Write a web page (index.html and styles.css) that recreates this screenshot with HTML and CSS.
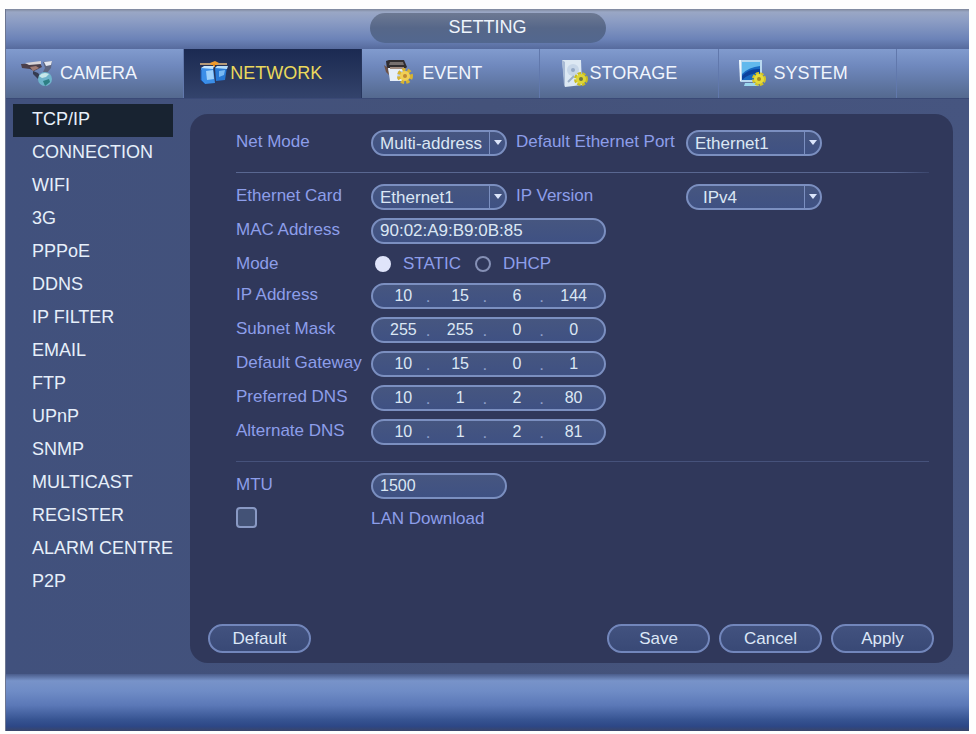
FILE: index.html
```html
<!DOCTYPE html>
<html lang="en">
<head>
    <meta charset="UTF-8">
    <meta name="viewport" content="width=device-width, initial-scale=1.0">
    <title>Setting - Network</title>
    <link rel="stylesheet" href="styles.css">
</head>
<body>
    <div class="window">
        <header class="title-bar">
            <h1 class="title">SETTING</h1>
        </header>

        <nav class="tabs">
            <a class="tab" href="#camera">
                <svg class="tab-icon" width="34" height="30" viewBox="0 0 34 30">
                    <path d="M0 5L19 4L21 8L13 12L9 10L1 9Z" fill="#4b3f4a"/>
                    <path d="M4 4L20 2L20 5L8 6Z" fill="#d8d4d8"/>
                    <path d="M9 8L15 7L18 9L12 12Z" fill="#a07c74"/>
                    <path d="M22 3L31 2L30 9L26 14L22 13L24 9Z" fill="#5d657f"/>
                    <path d="M23 3L31 2L30 6L25 7Z" fill="#e4e8f0"/>
                    <path d="M12 12L17 14L20 18L17 20L12 15Z" fill="#353b50"/>
                    <circle cx="24" cy="20" r="7" fill="#6fb4cb"/>
                    <path d="M18 17Q22 12 28 15L25 18L21 19Z" fill="#c7e7ea"/>
                    <path d="M22 22L28 20L29 23L24 27Z" fill="#2d7f84"/>
                </svg>
                <span class="tab-label">CAMERA</span>
            </a>
            <a class="tab tab-active" href="#network">
                <svg class="tab-icon" width="30" height="30" viewBox="0 0 30 30">
                    <path d="M1 5H28" stroke="#b59a78" stroke-width="2"/>
                    <path d="M11 4L16 2L20 4L18 6H12Z" fill="#ee9b2e"/>
                    <path d="M15 5V8" stroke="#e28a20" stroke-width="2"/>
                    <path d="M2 9L14 8L16 24L6 25L2 21Z" fill="#3b8ee8"/>
                    <path d="M2 9L5 7H15L14 10Z" fill="#c4e6ff"/>
                    <path d="M7 12L14 11L15 20L8 21Z" fill="#9dd0fb"/>
                    <path d="M16 9L28 8L26 21L17 22Z" fill="#2878d4"/>
                    <path d="M16 9L18 7H29L28 10Z" fill="#b3dcfb"/>
                    <path d="M20 12L26 11L25 16L20 18Z" fill="#78b9f4"/>
                    <path d="M2 11V21L6 25" stroke="#1a56ad" fill="none"/>
                </svg>
                <span class="tab-label">NETWORK</span>
            </a>
            <a class="tab" href="#event">
                <svg class="tab-icon" width="32" height="30" viewBox="0 0 32 30">
                    <path d="M3 2L6 1H21L24 8L22 10H4Z" fill="#302d30"/>
                    <path d="M7 3H20L21 6H6Z" fill="#77706f"/>
                    <path d="M1 6L5 9L7 17L3 13Z" fill="#6c5147"/>
                    <path d="M5 9H21V22H7Z" fill="#e6eef8"/>
                    <path d="M7 9H21" stroke="#a08b80" stroke-width="2"/>
                    <path d="M15 12H20V20H14Z" fill="#b9cdec"/>
                    <circle cx="22" cy="17" r="6" fill="none" stroke="#d8b430" stroke-width="4" stroke-dasharray="3 2"/>
                    <circle cx="22" cy="17" r="5" fill="#f1cf55"/>
                    <circle cx="22" cy="17" r="2" fill="#c08a35"/>
                </svg>
                <span class="tab-label">EVENT</span>
            </a>
            <a class="tab" href="#storage">
                <svg class="tab-icon" width="28" height="30" viewBox="0 0 28 30">
                    <path d="M1 1H20L21 26L4 28Z" fill="#dce8f3"/>
                    <path d="M1 1L4 3V28L3 26Z" fill="#a9bbd5"/>
                    <circle cx="12" cy="11" r="6" fill="#c6d6e8"/>
                    <circle cx="12" cy="11" r="2" fill="#93a7c4"/>
                    <path d="M7 23L13 17" stroke="#9aaec8" stroke-width="2"/>
                    <circle cx="20" cy="20" r="5" fill="none" stroke="#c9bd21" stroke-width="4" stroke-dasharray="3 1"/>
                    <circle cx="20" cy="20" r="5" fill="#ded637"/>
                    <circle cx="20" cy="20" r="2" fill="#6d7740"/>
                </svg>
                <span class="tab-label">STORAGE</span>
            </a>
            <a class="tab" href="#system">
                <svg class="tab-icon" width="30" height="30" viewBox="0 0 30 30">
                    <path d="M2 1H25V23H4Z" fill="#b9d8f0"/>
                    <path d="M2 1H4V23L3 22Z" fill="#eef7fd"/>
                    <path d="M5 3H23V21H5Z" fill="#1769c2"/>
                    <path d="M5 3H23V7Q12 8 5 15Z" fill="#61b9ed"/>
                    <path d="M5 17Q12 9 23 10V14Q12 14 5 21Z" fill="#0b429e"/>
                    <path d="M8 24H20L22 27H7Z" fill="#9bd7ee"/>
                    <circle cx="22" cy="20" r="5" fill="none" stroke="#d4c325" stroke-width="4" stroke-dasharray="3 1"/>
                    <circle cx="22" cy="20" r="5" fill="#e5dc3b"/>
                    <circle cx="22" cy="20" r="2" fill="#a18a24"/>
                </svg>
                <span class="tab-label">SYSTEM</span>
            </a>
        </nav>

        <div class="content">
            <nav class="sidebar">
                <a class="side-link side-active" href="#tcpip">TCP/IP</a>
                <a class="side-link" href="#connection">CONNECTION</a>
                <a class="side-link" href="#wifi">WIFI</a>
                <a class="side-link" href="#3g">3G</a>
                <a class="side-link" href="#pppoe">PPPoE</a>
                <a class="side-link" href="#ddns">DDNS</a>
                <a class="side-link" href="#ipfilter">IP FILTER</a>
                <a class="side-link" href="#email">EMAIL</a>
                <a class="side-link" href="#ftp">FTP</a>
                <a class="side-link" href="#upnp">UPnP</a>
                <a class="side-link" href="#snmp">SNMP</a>
                <a class="side-link" href="#multicast">MULTICAST</a>
                <a class="side-link" href="#register">REGISTER</a>
                <a class="side-link" href="#alarm">ALARM CENTRE</a>
                <a class="side-link" href="#p2p">P2P</a>
            </nav>

            <form class="panel">
                <div class="fields">
                    <div class="row">
                        <label for="netMode">Net Mode</label>
                        <div class="select">
                            <select id="netMode"><option>Multi-address</option></select>
                            <svg class="arrow" width="8" height="5" viewBox="0 0 8 5"><path d="M0 0H8L4 5Z" fill="#dbe5fa"/></svg>
                        </div>
                        <label for="defaultPort">Default Ethernet Port</label>
                        <div class="select">
                            <select id="defaultPort"><option>Ethernet1</option></select>
                            <svg class="arrow" width="8" height="5" viewBox="0 0 8 5"><path d="M0 0H8L4 5Z" fill="#dbe5fa"/></svg>
                        </div>
                    </div>

                    <hr class="line">

                    <div class="row">
                        <label for="card">Ethernet Card</label>
                        <div class="select">
                            <select id="card"><option>Ethernet1</option></select>
                            <svg class="arrow" width="8" height="5" viewBox="0 0 8 5"><path d="M0 0H8L4 5Z" fill="#dbe5fa"/></svg>
                        </div>
                        <label for="ipVersion">IP Version</label>
                        <div class="select">
                            <select class="indent" id="ipVersion"><option>IPv4</option></select>
                            <svg class="arrow" width="8" height="5" viewBox="0 0 8 5"><path d="M0 0H8L4 5Z" fill="#dbe5fa"/></svg>
                        </div>
                    </div>
                    <div class="row">
                        <label for="mac">MAC Address</label>
                        <input class="text wide" type="text" id="mac" value="90:02:A9:B9:0B:85">
                    </div>
                    <div class="row" role="radiogroup" aria-labelledby="modeLabel">
                        <span id="modeLabel">Mode</span>
                        <div class="modes">
                            <input class="radio" type="radio" name="mode" id="static" checked>
                            <label for="static">STATIC</label>
                            <input class="radio" type="radio" name="mode" id="dhcp">
                            <label for="dhcp">DHCP</label>
                        </div>
                    </div>
                    <div class="row">
                        <label for="ip1">IP Address</label>
                        <div class="ip">
                            <input type="text" id="ip1" value="10"><span>.</span>
                            <input type="text" aria-label="IP Address 2" value="15"><span>.</span>
                            <input type="text" aria-label="IP Address 3" value="6"><span>.</span>
                            <input type="text" aria-label="IP Address 4" value="144">
                        </div>
                    </div>
                    <div class="row">
                        <label for="mask1">Subnet Mask</label>
                        <div class="ip">
                            <input type="text" id="mask1" value="255"><span>.</span>
                            <input type="text" aria-label="Subnet Mask 2" value="255"><span>.</span>
                            <input type="text" aria-label="Subnet Mask 3" value="0"><span>.</span>
                            <input type="text" aria-label="Subnet Mask 4" value="0">
                        </div>
                    </div>
                    <div class="row">
                        <label for="gateway1">Default Gateway</label>
                        <div class="ip">
                            <input type="text" id="gateway1" value="10"><span>.</span>
                            <input type="text" aria-label="Default Gateway 2" value="15"><span>.</span>
                            <input type="text" aria-label="Default Gateway 3" value="0"><span>.</span>
                            <input type="text" aria-label="Default Gateway 4" value="1">
                        </div>
                    </div>
                    <div class="row">
                        <label for="dns1">Preferred DNS</label>
                        <div class="ip">
                            <input type="text" id="dns1" value="10"><span>.</span>
                            <input type="text" aria-label="Preferred DNS 2" value="1"><span>.</span>
                            <input type="text" aria-label="Preferred DNS 3" value="2"><span>.</span>
                            <input type="text" aria-label="Preferred DNS 4" value="80">
                        </div>
                    </div>
                    <div class="row">
                        <label for="alt1">Alternate DNS</label>
                        <div class="ip">
                            <input type="text" id="alt1" value="10"><span>.</span>
                            <input type="text" aria-label="Alternate DNS 2" value="1"><span>.</span>
                            <input type="text" aria-label="Alternate DNS 3" value="2"><span>.</span>
                            <input type="text" aria-label="Alternate DNS 4" value="81">
                        </div>
                    </div>

                    <hr class="line line-dim">

                    <div class="row">
                        <label for="mtu">MTU</label>
                        <input class="text" type="text" id="mtu" value="1500">
                    </div>
                    <div class="row">
                        <input class="checkbox" type="checkbox" id="lan">
                        <label for="lan">LAN Download</label>
                    </div>
                </div>

                <div class="buttons">
                    <button class="button button-default" type="button">Default</button>
                    <button class="button" type="button">Save</button>
                    <button class="button" type="button">Cancel</button>
                    <button class="button" type="button">Apply</button>
                </div>
            </form>
        </div>

        <footer class="footer"></footer>
    </div>
</body>
</html>
```
FILE: styles.css
```css
* {
    margin: 0;
    padding: 0;
    box-sizing: border-box;
    font-family: "Liberation Sans", Arial, sans-serif;
}

body {
    background-color: #fefefe;
    min-height: 100vh;
    padding: 9px 7px 3px 5px;
    display: flex;
    flex-direction: column;
}

.window {
    flex: 1;
    display: flex;
    flex-direction: column;
    background-color: #43527b;
    border-left: 1px solid #6c7590;
}

.title-bar {
    height: 40px;
    padding-top: 4px;
    display: flex;
    justify-content: center;
    background: linear-gradient(#7e879b, #9aa7c5 3px, #8c9dc4 30%, #6c83b8 75%, #566a9d);
}

.title {
    width: 236px;
    height: 30px;
    border-radius: 15px;
    background: linear-gradient(#6d7993, #566789 50%, #52678f);
    color: #eef4fc;
    font-size: 18px;
    font-weight: normal;
    line-height: 29px;
    text-align: center;
}

/* Tabs */
.tabs {
    height: 50px;
    display: grid;
    grid-template-columns: repeat(5, 37fr) 15fr;
    background: linear-gradient(#819bce, #6f88bd 35%, #54698f);
    border-bottom: 1px solid #3a4976;
}

.tab {
    display: flex;
    align-items: center;
    padding-left: 15px;
    gap: 5px;
    border-right: 1px solid #6178ac;
    color: #f0f5fd;
    font-size: 18px;
    text-decoration: none;
}

.tab:nth-child(n+3) {
    padding-left: 21px;
}

.tab-active {
    gap: 1px;
    background: linear-gradient(#1b2a52, #27365d 50%, #33436c);
    border-right-color: #27365d;
    color: #ead95c;
}

.tab:nth-child(3) {
    gap: 7px;
}

.tab:nth-child(4) {
    gap: 0;
}

.tab:nth-child(5) {
    padding-left: 18px;
    gap: 7px;
}

/* Content */
.content {
    flex: 1;
    display: flex;
    padding: 5px 16px 11px 7px;
    background: linear-gradient(90deg, #41517d, #44527a 50%, #465580);
}

.sidebar {
    width: 160px;
    margin-right: 17px;
    flex-shrink: 0;
}

.side-link {
    display: block;
    height: 33px;
    padding-left: 19px;
    color: #e6effa;
    font-size: 18px;
    line-height: 31px;
    text-decoration: none;
    white-space: nowrap;
}

.side-active {
    background-color: #182331;
}

.panel {
    flex: 1;
    display: flex;
    flex-direction: column;
    margin-top: 10px;
    padding: 16px 19px 10px 18px;
    border-radius: 18px;
    background-color: #30385b;
    color: #8d9eea;
    font-size: 17px;
}

.fields {
    display: flex;
    flex-direction: column;
    gap: 8px;
    padding: 0 5px 0 28px;
}

.row {
    display: grid;
    grid-template-columns: 126px 136px 161px 136px;
    column-gap: 9px;
    line-height: 23px;
    white-space: nowrap;
}

.line {
    height: 1px;
    margin: 8px 0 3px;
    border: none;
    background: linear-gradient(90deg, #596791, #596791 95%, #3b466d);
}

.line-dim {
    background: #46527b;
}

.select {
    position: relative;
}

select,
.text,
.ip {
    width: 100%;
    height: 26px;
    border: 2px solid #7b8fc0;
    border-radius: 13px;
    background: linear-gradient(#465680, #3f5183);
    color: #dbe7f4;
    font-size: 17px;
}

select {
    appearance: none;
    padding-left: 7px;
    background: linear-gradient(#7b8fc0, #7b8fc0) right 15px top 0 / 1px 100% no-repeat, linear-gradient(#465680, #3f5183);
}

.indent {
    padding-left: 15px;
}

.arrow {
    position: absolute;
    top: 10px;
    right: 5px;
    pointer-events: none;
}

.text {
    padding-left: 7px;
}

#mtu {
    font-size: 16px;
}

.wide,
.ip {
    grid-column: span 2;
    width: 235px;
}

.ip {
    display: flex;
    align-items: center;
    padding: 0 8px;
}

.ip input {
    flex: 1;
    min-width: 0;
    border: none;
    background: none;
    color: #dbe7f4;
    font-size: 16px;
    text-align: center;
}

.ip span {
    width: 12px;
    color: #8e9fca;
}

/* Mode */
.modes {
    grid-column: span 2;
    display: flex;
    align-items: center;
    padding-left: 4px;
}

.modes label {
    margin: 0 14px 0 12px;
}

.radio {
    appearance: none;
    width: 16px;
    height: 16px;
    border: 2px solid #8590b5;
    border-radius: 50%;
}

.radio:checked {
    border-color: #dfe4fa;
    background-color: #dfe4fa;
}

.checkbox {
    appearance: none;
    width: 21px;
    height: 21px;
    border: 2px solid #8999c4;
    border-radius: 4px;
    background-color: #435276;
}

/* Buttons */
.buttons {
    display: flex;
    gap: 9px;
    margin-top: auto;
}

.button {
    width: 103px;
    height: 29px;
    border: 2px solid #7286bb;
    border-radius: 15px;
    background: linear-gradient(#42527f, #394976);
    color: #dce7f7;
    font-size: 17px;
    line-height: 22px;
}

.button-default {
    margin-right: auto;
}

.footer {
    height: 57px;
    background: linear-gradient(#4a5c8b, #7893c9 12%, #6f8cc6 30%, #5b78b7 55%, #375492 80%, #2d4786 92%, #3a4569);
}
```
